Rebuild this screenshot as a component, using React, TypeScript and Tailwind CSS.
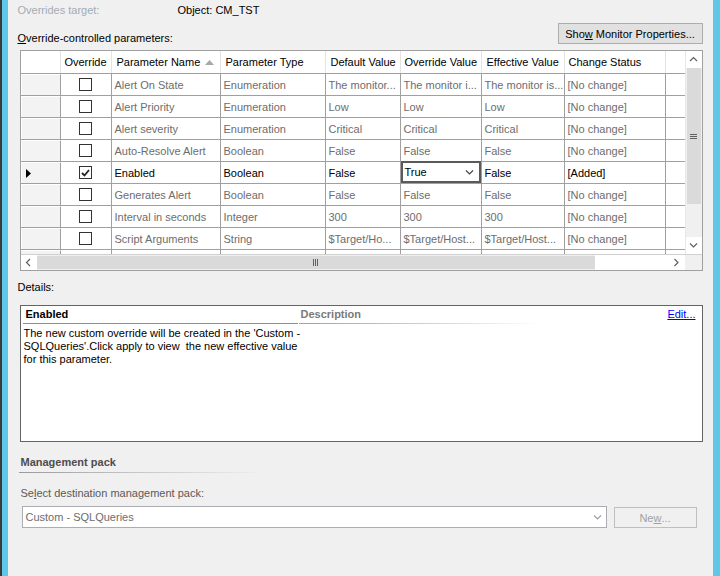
import React from 'react';

type Row = {
  name: string;
  type: string;
  def: string;
  ov: string;
  eff: string;
  status: string;
  active?: boolean;
};

const rows: Row[] = [
  { name: 'Alert On State', type: 'Enumeration', def: 'The monitor...', ov: 'The monitor i...', eff: 'The monitor is...', status: '[No change]' },
  { name: 'Alert Priority', type: 'Enumeration', def: 'Low', ov: 'Low', eff: 'Low', status: '[No change]' },
  { name: 'Alert severity', type: 'Enumeration', def: 'Critical', ov: 'Critical', eff: 'Critical', status: '[No change]' },
  { name: 'Auto-Resolve Alert', type: 'Boolean', def: 'False', ov: 'False', eff: 'False', status: '[No change]' },
  { name: 'Enabled', type: 'Boolean', def: 'False', ov: 'True', eff: 'False', status: '[Added]', active: true },
  { name: 'Generates Alert', type: 'Boolean', def: 'False', ov: 'False', eff: 'False', status: '[No change]' },
  { name: 'Interval in seconds', type: 'Integer', def: '300', ov: '300', eff: '300', status: '[No change]' },
  { name: 'Script Arguments', type: 'String', def: '$Target/Ho...', ov: '$Target/Host...', eff: '$Target/Host...', status: '[No change]' },
];

function Chevron({ dir, className }: { dir: 'up' | 'down' | 'left' | 'right'; className?: string }) {
  const pts = {
    up: '1,5 4.5,1.5 8,5',
    down: '1,1.5 4.5,5 8,1.5',
    left: '5,1 1.5,4.5 5,8',
    right: '1.5,1 5,4.5 1.5,8',
  }[dir];
  const vertical = dir === 'up' || dir === 'down';
  return (
    <svg width={vertical ? 9 : 7} height={vertical ? 7 : 9} viewBox={vertical ? '0 0 9 7' : '0 0 7 9'} className={className}>
      <polyline points={pts} fill="none" stroke="currentColor" strokeWidth="1.2" />
    </svg>
  );
}

function Checkbox({ checked }: { checked?: boolean }) {
  return (
    <div className="w-[13px] h-[13px] border border-[#333] bg-white flex items-center justify-center">
      {checked && (
        <svg width="9" height="8" viewBox="0 0 9 8">
          <path d="M1 4 L3.5 6.5 L8 1" fill="none" stroke="#222" strokeWidth="1.8" />
        </svg>
      )}
    </div>
  );
}

function Grid() {
  return (
    <div className="ml-[2px] h-[221px] border border-[#a0a0a0] flex flex-col bg-[#f0f0f0]">
      <div className="flex h-[203px]">
        <div className="w-[664px] flex flex-col bg-white overflow-hidden">
          {/* header */}
          <div className="flex h-[23px] shrink-0 border-b border-[#a0a0a0] bg-white text-black">
            <div className="w-[40px] border-r border-[#e3e3e3]" />
            <div className="w-[51px] border-r border-[#e3e3e3] flex items-center justify-center">Override</div>
            <div className="w-[109px] border-r border-[#e3e3e3] flex items-center pl-[5px] pr-[6px] justify-between">
              <span>Parameter Name</span>
              <svg width="9" height="5" viewBox="0 0 9 5">
                <polygon points="0,5 4.5,0 9,5" fill="#a8a8a8" />
              </svg>
            </div>
            <div className="w-[105px] border-r border-[#e3e3e3] flex items-center pl-[5px]">Parameter Type</div>
            <div className="w-[75px] border-r border-[#e3e3e3] flex items-center pl-[5px]">Default Value</div>
            <div className="w-[81px] border-r border-[#e3e3e3] flex items-center pl-[4px]">Override Value</div>
            <div className="w-[83px] border-r border-[#e3e3e3] flex items-center pl-[5px]">Effective Value</div>
            <div className="w-[101px] border-r border-[#e3e3e3] flex items-center pl-[4px]">Change Status</div>
            <div className="flex-1" />
          </div>
          {rows.map((r) => {
            const tc = r.active ? 'text-black' : 'text-[#6d6d6d]';
            return (
              <div key={r.name} className={`flex h-[22px] shrink-0 border-b border-[#a0a0a0] ${tc}`}>
                <div className="w-[40px] border-r border-[#a0a0a0] bg-[#f3f3f3] border-t border-l border-t-white border-l-white flex items-center pl-[4px]">
                  {r.active && (
                    <svg width="5" height="9" viewBox="0 0 5 9">
                      <polygon points="0,0 5,4.5 0,9" fill="#000" />
                    </svg>
                  )}
                </div>
                <div className="w-[51px] border-r border-[#a0a0a0] flex items-center justify-center">
                  <Checkbox checked={r.active} />
                </div>
                <div className="w-[109px] border-r border-[#a0a0a0] flex items-center pl-[3px] whitespace-nowrap overflow-hidden">{r.name}</div>
                <div className="w-[105px] border-r border-[#a0a0a0] flex items-center pl-[3px] whitespace-nowrap overflow-hidden">{r.type}</div>
                <div className="w-[75px] border-r border-[#a0a0a0] flex items-center pl-[3px] whitespace-nowrap overflow-hidden">{r.def}</div>
                {r.active ? (
                  <div className="w-[81px] border-r border-[#a0a0a0] flex">
                    <div className="flex-1 border-2 border-[#5a5a5a] -mt-px flex items-center justify-between pl-[2px] pr-[5px] bg-white">
                      <span>{r.ov}</span>
                      <Chevron dir="down" className="text-[#444]" />
                    </div>
                  </div>
                ) : (
                  <div className="w-[81px] border-r border-[#a0a0a0] flex items-center pl-[3px] whitespace-nowrap overflow-hidden">{r.ov}</div>
                )}
                <div className="w-[83px] border-r border-[#a0a0a0] flex items-center pl-[3px] whitespace-nowrap overflow-hidden">{r.eff}</div>
                <div className="w-[101px] border-r border-[#a0a0a0] flex items-center pl-[3px] whitespace-nowrap overflow-hidden">{r.status}</div>
                <div className="flex-1" />
              </div>
            );
          })}
          <div className="flex h-[4px] shrink-0">
            <div className="w-[40px] border-r border-[#a0a0a0] bg-[#f3f3f3] border-t border-t-white" />
            <div className="w-[51px] border-r border-[#a0a0a0]" />
            <div className="w-[109px] border-r border-[#a0a0a0]" />
            <div className="w-[105px] border-r border-[#a0a0a0]" />
            <div className="w-[75px] border-r border-[#a0a0a0]" />
            <div className="w-[81px] border-r border-[#a0a0a0]" />
            <div className="w-[83px] border-r border-[#a0a0a0]" />
            <div className="w-[101px] border-r border-[#a0a0a0]" />
          </div>
        </div>
        {/* vertical scrollbar */}
        <div className="w-[17px] flex flex-col bg-[#f0f0f0] border-l border-[#e8e8e8]">
          <div className="h-[17px] flex items-center justify-center bg-white text-[#606060]">
            <Chevron dir="up" />
          </div>
          <div className="h-[136px] bg-[#dadada] mx-[1px] flex items-center justify-center">
            <div className="flex flex-col gap-[1px]">
              <div className="w-[7px] h-px bg-[#606060]" />
              <div className="w-[7px] h-px bg-[#606060]" />
              <div className="w-[7px] h-px bg-[#606060]" />
            </div>
          </div>
          <div className="flex-1" />
          <div className="h-[17px] flex items-center justify-center bg-white text-[#606060]">
            <Chevron dir="down" />
          </div>
        </div>
      </div>
      {/* horizontal scrollbar */}
      <div className="flex h-[16px] border-t border-[#d0d0d0]">
        <div className="w-[16px] flex items-center justify-center bg-white text-[#606060]">
          <Chevron dir="left" />
        </div>
        <div className="w-[558px] bg-[#dadada] my-[1px] flex items-center justify-center">
          <div className="flex gap-[1px]">
            <div className="w-px h-[7px] bg-[#606060]" />
            <div className="w-px h-[7px] bg-[#606060]" />
            <div className="w-px h-[7px] bg-[#606060]" />
          </div>
        </div>
        <div className="w-[73px] bg-white" />
        <div className="w-[17px] flex items-center justify-center bg-white text-[#606060]">
          <Chevron dir="right" />
        </div>
        <div className="flex-1 bg-[#f0f0f0]" />
      </div>
    </div>
  );
}

export default function App() {
  return (
    <div className="flex w-[720px] h-[576px] overflow-hidden bg-[#f0f0f0] font-['Liberation_Sans',Arial,sans-serif] text-[11px] leading-[14px] text-black">
      <div className="w-[2px] bg-[#3a3a3a]" />
      <div className="w-[6px] bg-[#5fc8e9]" />
      <div className="flex-1 flex flex-col pl-[10px] pr-[10px]">
        {/* target */}
        <div className="flex pt-[3px]">
          <span className="w-[160px] text-[#a3acb5]">Overrides target:</span>
          <span>Object: CM_TST</span>
        </div>
        {/* toolbar */}
        <div className="flex justify-between items-start mt-[6px] h-[27px]">
          <span className="pt-[8px]">
            <span className="underline">O</span>verride-controlled parameters:
          </span>
          <button className="h-[21px] w-[145px] border border-[#adadad] bg-[#e1e1e1] text-black">
            Sho<span className="underline">w</span> Monitor Properties...
          </button>
        </div>
        <Grid />
        {/* details */}
        <div className="mt-[9px]">Details:</div>
        <div className="ml-[2px] mt-[11px] h-[137px] border border-[#646464] bg-white flex">
          <div className="w-[278px] shrink-0 flex flex-col">
            <div className="pl-[5px] pt-px font-bold">Enabled</div>
            <div className="ml-[2px] mt-[2px] w-[275px] h-px bg-[#909090]" />
            <div className="pl-[3px] pt-[3px] leading-[13px] whitespace-nowrap">
              <div>The new custom override will be created in the 'Custom -</div>
              <div>SQLQueries'.Click apply to view&nbsp; the new effective value</div>
              <div>for this parameter.</div>
            </div>
          </div>
          <div className="flex-1 flex flex-col">
            <div className="flex justify-between pr-[6px] pt-px">
              <span className="pl-[2px] font-bold text-[#7a7a7a]">Description</span>
              <span className="text-[#0000ff] underline">Edit...</span>
            </div>
            <div className="mt-[2px] w-[241px] h-px bg-gradient-to-r from-[#a0a0a0] to-white" />
          </div>
        </div>
        {/* management pack */}
        <div className="mt-[13px] pl-[3px] font-bold text-[#4d4d4d]">Management pack</div>
        <div className="ml-px mt-[3px] w-[246px] h-px bg-gradient-to-r from-[#9a9a9a] via-[#c8c8c8] to-[#f0f0f0]" />
        <div className="mt-[13px] pl-[3px] text-[#5a5a5a]">
          Se<span className="underline">l</span>ect destination management pack:
        </div>
        <div className="flex mt-[6px] items-start">
          <div className="ml-[4px] w-[585px] h-[22px] border border-[#abadb3] bg-white flex items-center justify-between pl-[3px] pr-[4px] text-[#6d6d6d]">
            <span>Custom - SQLQueries</span>
            <Chevron dir="down" className="text-[#a0a0a0]" />
          </div>
          <div className="ml-[7px] mt-px w-[83px] h-[21px] border border-[#bfbfbf] bg-[#f0f0f0] flex items-center justify-center text-[#a0a0a0]">
            Ne<span className="underline">w</span>...
          </div>
        </div>
      </div>
      <div className="w-[8px] bg-[#5fc8e9]" />
    </div>
  );
}
